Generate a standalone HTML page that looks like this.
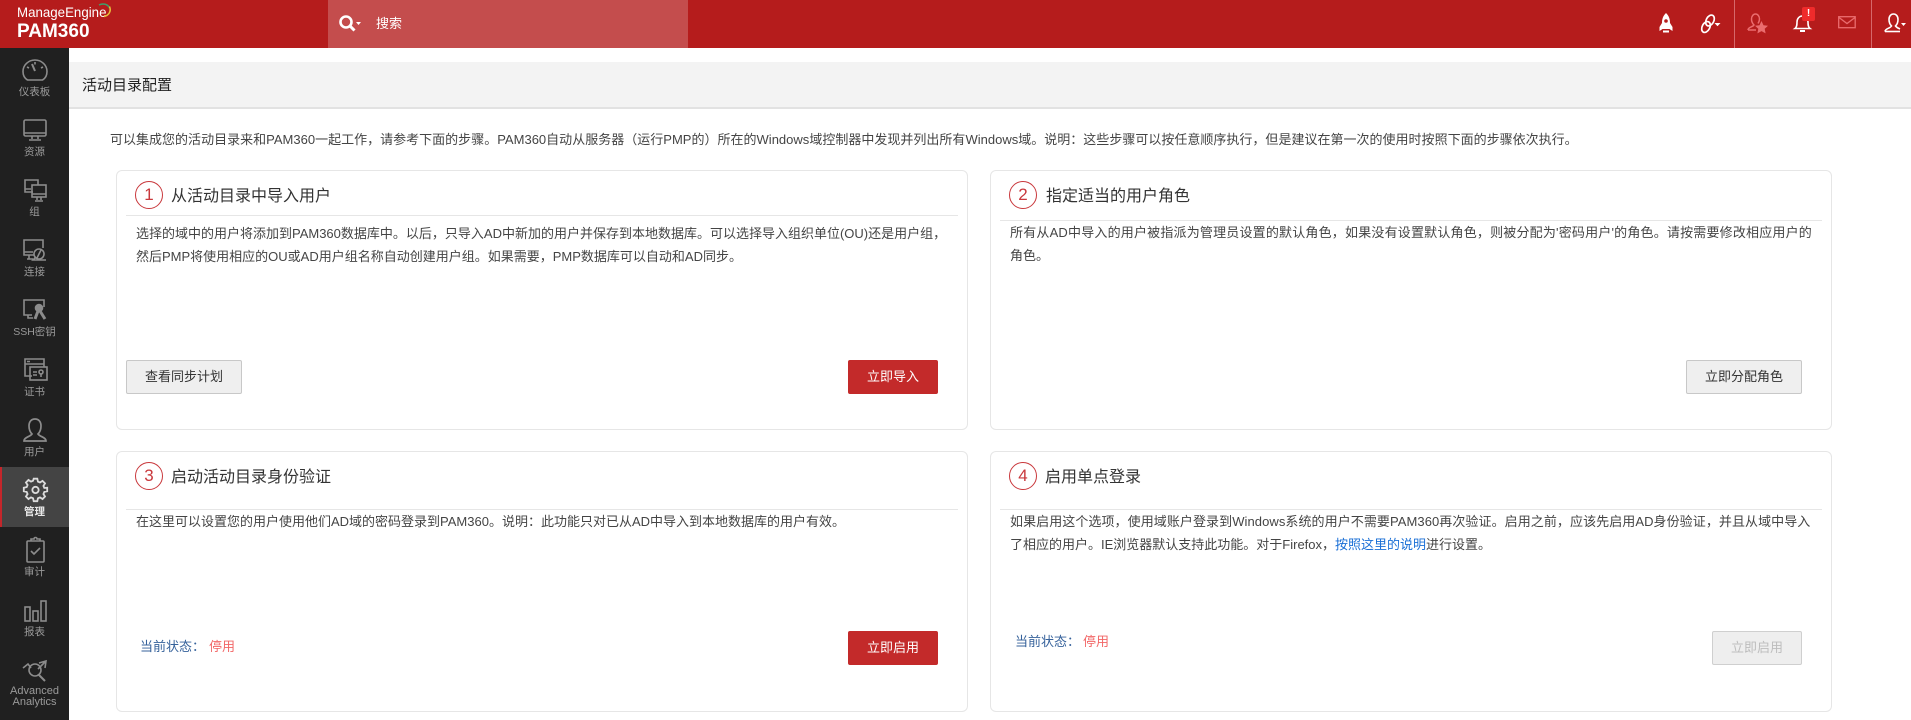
<!DOCTYPE html>
<html lang="zh">
<head>
<meta charset="utf-8">
<title>活动目录配置</title>
<style>
html,body{margin:0;padding:0;width:1911px;height:720px;overflow:hidden;background:#fff;font-family:"Liberation Sans","Noto Sans CJK SC",sans-serif;font-size:13px;color:#333}
.a{position:absolute;white-space:nowrap}
#top{position:absolute;left:0;top:0;width:1911px;height:48px;background:#b51c1c}
#search{position:absolute;left:328px;top:0;width:360px;height:48px;background:#c44d4d}
#side{position:absolute;left:0;top:48px;width:69px;height:672px;background:#202020}
#active{position:absolute;left:0;top:467px;width:69px;height:60px;background:#444;border-left:2px solid #c4262b;box-sizing:border-box}
.lb{position:absolute;left:0;width:69px;text-align:center;font-size:10.5px;line-height:12px;color:#9a9a9a;white-space:nowrap}
.ic{position:absolute;left:20px;width:30px;height:30px;fill:none;stroke:#8c8c8c;stroke-width:1.6}
#bar{position:absolute;left:69px;top:62px;width:1842px;height:45px;background:#f3f3f3;border-bottom:2px solid #e2e2e2}
.card{position:absolute;box-sizing:border-box;border:1px solid #e6e6e6;border-radius:6px;background:#fff}
.sep{position:absolute;height:1px;background:#e6e6e6}
.num{position:absolute;box-sizing:border-box;width:28px;height:28px;border:1px solid #c9383c;border-radius:50%;text-align:center;line-height:26px;font-size:17px;color:#c9383c}
.tt{position:absolute;font-size:16px;line-height:24px;color:#333;white-space:nowrap}
.tx{position:absolute;font-size:13px;line-height:22.5px;color:#444;white-space:nowrap}
.btn{position:absolute;box-sizing:border-box;height:34px;text-align:center;line-height:32px;font-size:13px;border-radius:2px}
.red{background:#c32a2a;color:#fff;border:1px solid #c32a2a}
.gray{background:#efefef;color:#333;border:1px solid #c8c8c8}
.off{background:#eee;color:#bdbdbd;border:1px solid #cfcfcf}
.st{position:absolute;font-size:13px;line-height:16px;color:#36629b;white-space:nowrap}
.st2{position:absolute;font-size:13px;line-height:16px;color:#f26666;white-space:nowrap}
svg{position:absolute;overflow:visible}
</style>
</head>
<body>
<div id="top"></div>
<div id="search"></div>
<div class="a" style="left:17px;top:3px;font-size:14px;line-height:18px;color:#fff;transform:scaleX(.95);transform-origin:0 0">ManageEngine</div>
<svg style="left:99px;top:3px" width="13" height="14" viewBox="0 0 13 14" fill="none" stroke-width="1.5"><path d="M0 2C4 0 9 1 10.500 5" stroke="#3f9f6a"/><path d="M10.500 3.500C12.500 8 10 12.500 5 13.500" stroke="#e8c13a"/></svg>
<div class="a" style="left:17px;top:19px;font-size:19px;line-height:26px;font-weight:bold;color:#fff">PAM360</div>

<svg style="left:338px;top:13px" width="24" height="20" viewBox="0 0 24 20" fill="none" stroke="#fff"><circle cx="8" cy="9" r="5.500" stroke-width="2.600"/><path d="M12 13l4.500 4.500" stroke-width="3"/><path d="M18 9h5l-2.500 3z" fill="#fff" stroke="none"/></svg>
<div class="a" style="left:376px;top:15px;font-size:13px;line-height:18px;color:#fff">搜索</div>

<!-- top right icons -->
<svg style="left:1656px;top:12px" width="20" height="22" viewBox="0 0 20 22"><path d="M10 1C7 4 6 7 6 11l-2.500 4v4l3-2h7l3 2v-4L14 11c0-4-1-7-4-10z" fill="#fff"/><circle cx="10" cy="9" r="1.800" fill="#b51c1c"/><path d="M7 18.500h6v2H7z" fill="#fff"/></svg>
<svg style="left:1700px;top:14px" width="22" height="20" viewBox="0 0 22 20" fill="none" stroke="#fff" stroke-width="1.700"><ellipse cx="10" cy="6.500" rx="3.800" ry="5.800" transform="rotate(28 10 6.500)"/><ellipse cx="6" cy="13" rx="3.800" ry="5.800" transform="rotate(28 6 13)"/><path d="M14.500 9h6l-3 3.200z" fill="#fff" stroke="none"/></svg>
<div class="a" style="left:1734px;top:0;width:1px;height:48px;background:#d6686a"></div>
<svg style="left:1747px;top:13px" width="22" height="22" viewBox="0 0 22 22" fill="none" stroke="#ea6c6e" stroke-width="1.500"><path d="M1 17c0-3 5-3 6-5-2-2-2.500-4-2.500-6 0-3 2-5 4-5s4 2 4 5c0 1.500-.5 3-1.500 4.500"/><path d="M1 17h8"/><path d="M14.500 8l2 4.300 4.500.5-3.300 3 .9 4.600-4.100-2.300-4.100 2.300.9-4.600-3.300-3 4.500-.5z" fill="#ea6c6e" stroke="none"/></svg>
<svg style="left:1794px;top:13px" width="18" height="20" viewBox="0 0 18 20" fill="none" stroke="#fff" stroke-width="1.600"><path d="M1 15.500c2-1.500 2-4 2-6.500 0-3 2-6 5.500-6S14 6 14 9c0 2.500 0 5 2 6.500z"/><path d="M6 18h5" stroke-width="2"/></svg>
<div class="a" style="left:1802px;top:7px;width:13px;height:14px;background:#ef2b2b;border-radius:2px;color:#fff;font-size:10px;line-height:14px;font-weight:bold;text-align:center">!</div>
<svg style="left:1838px;top:16px" width="18" height="13" viewBox="0 0 18 13" fill="none" stroke="#ea6c6e" stroke-width="1.300"><rect x=".7" y=".7" width="16.500" height="11"/><path d="M1 1.500l8 6 8-6"/></svg>
<div class="a" style="left:1871px;top:0;width:1px;height:48px;background:#d6686a"></div>
<svg style="left:1884px;top:13px" width="22" height="20" viewBox="0 0 22 20" fill="none" stroke="#fff" stroke-width="1.600"><path d="M1 18.500c0-3 5-3 6.500-5.500-2-2-2.500-4-2.500-6.500C5 3 7 1 9.500 1S14 3 14 6.500c0 2.500-.5 4.500-2.500 6.500 1 1.500 3 2.200 4.500 3"/><path d="M1 18.500h15"/><path d="M17 10h5l-2.500 3z" fill="#fff" stroke="none"/></svg>

<!-- sidebar -->
<div id="side"></div>
<div id="active"></div>
<svg class="ic" style="top:55px" viewBox="0 0 30 30"><path d="M7.500 25C4 23 3 19.500 3 16.500 3 10 8.500 5 15 5s12 5 12 11.500c0 3-1 6.500-4.500 8.500z"/><path d="M15 16l-3-7" stroke-width="2"/><path d="M15 7v2.500M7 12l2 1M23 12l-2 1"/></svg>
<div class="lb" style="top:86px">仪表板</div>
<svg class="ic" style="top:115px" viewBox="0 0 30 30"><rect x="4" y="5" width="22" height="16" rx="1.500"/><path d="M4 18h22M12 21v3M18 21v3M9 25h12"/></svg>
<div class="lb" style="top:146px">资源</div>
<svg class="ic" style="top:175px" viewBox="0 0 30 30"><path d="M13 17H5V5h13v5M5 14h6"/><rect x="12" y="10" width="14" height="12"/><path d="M12 19h14M17 22v3M21 22v3M15 26h8"/></svg>
<div class="lb" style="top:206px">组</div>
<svg class="ic" style="top:235px" viewBox="0 0 30 30"><path d="M14 20H4V5h19v8M4 17h9M9 20v4M7 24h6"/><circle cx="19" cy="19" r="5"/><path d="M16 22l-3 3h13M21 15l-4 8"/></svg>
<div class="lb" style="top:266px">连接</div>
<svg class="ic" style="top:295px" viewBox="0 0 30 30"><path d="M12 20H4V5h20v7M8 20v3h5"/><circle cx="19" cy="13" r="3.500" fill="#8c8c8c"/><path d="M18 16l-3 8M20 16l5 8" stroke-width="3"/></svg>
<div class="lb" style="top:326px">SSH密钥</div>
<svg class="ic" style="top:355px" viewBox="0 0 30 30"><path d="M12 21H5V4h19v8M5 9h19M7 6.500h3"/><rect x="10" y="12" width="17" height="13"/><circle cx="21" cy="17" r="2"/><path d="M21 19v3M13 17h4M13 20h4"/></svg>
<div class="lb" style="top:386px">证书</div>
<svg class="ic" style="top:415px" viewBox="0 0 30 30"><path d="M4 26c0-4 6-4 8-7-2.500-2.500-3-5-3-8 0-4.500 2.500-7 6-7s6 2.500 6 7c0 3-.5 5.500-3 8 2 3 8 3 8 7z" stroke-width="1.700"/></svg>
<div class="lb" style="top:446px">用户</div>
<svg class="ic" style="left:21.500px;top:476px;width:27px;height:27px;stroke:#dcdcdc;stroke-width:2" viewBox="0 0 30 30"><path d="M13 3h4l.7 3.200 2.300 1 2.800-1.800 2.800 2.800-1.800 2.800 1 2.300L28 13v4l-3.200.7-1 2.300 1.800 2.800-2.800 2.800-2.800-1.800-2.300 1L17 28h-4l-.7-3.200-2.300-1-2.800 1.800-2.800-2.800 1.800-2.800-1-2.300L2 17v-4l3.200-.7 1-2.300-1.800-2.800 2.800-2.800 2.800 1.800 2.300-1z"/><circle cx="15" cy="15.500" r="3.500"/></svg>
<div class="lb" style="top:506px;color:#e8e8e8;font-weight:bold">管理</div>
<svg class="ic" style="top:535px" viewBox="0 0 30 30"><rect x="7" y="6" width="17" height="21" rx="1"/><path d="M11 6V4h3c0-2 3-2 3 0h3v2"/><path d="M11 16l3 3 6-6"/></svg>
<div class="lb" style="top:566px">审计</div>
<svg class="ic" style="top:595px" viewBox="0 0 30 30"><rect x="5" y="12" width="5" height="14"/><rect x="13" y="16" width="5" height="10"/><rect x="21" y="6" width="5" height="20"/></svg>
<div class="lb" style="top:626px">报表</div>
<svg class="ic" style="top:655px" viewBox="0 0 30 30"><path d="M3 13l5-4 3 4M19 8l7-2-1 7M26 6l-8 8"/><circle cx="15" cy="15" r="6"/><path d="M19 20l6 6" stroke-width="2"/></svg>
<div class="lb" style="top:686px;font-size:11px;line-height:10.500px">Advanced<br>Analytics</div>

<!-- title bar -->
<div id="bar"></div>
<div class="a" style="left:82px;top:76px;font-size:15px;line-height:20px;color:#222">活动目录配置</div>
<div class="a" style="left:110px;top:131px;font-size:13px;line-height:18px;color:#444;letter-spacing:.01px">可以集成您的活动目录来和PAM360一起工作，请参考下面的步骤。PAM360自动从服务器（运行PMP的）所在的Windows域控制器中发现并列出所有Windows域。说明：这些步骤可以按任意顺序执行，但是建议在第一次的使用时按照下面的步骤依次执行。</div>

<!-- card 1 -->
<div class="card" style="left:116px;top:170px;width:852px;height:260px"></div>
<div class="num" style="left:135px;top:181px">1</div>
<div class="tt" style="left:171px;top:185px">从活动目录中导入用户</div>
<div class="sep" style="left:126px;top:215px;width:832px"></div>
<div class="tx" style="left:136px;top:223px">选择的域中的用户将添加到PAM360数据库中。以后，只导入AD中新加的用户并保存到本地数据库。可以选择导入组织单位(OU)还是用户组，<br>然后PMP将使用相应的OU或AD用户组名称自动创建用户组。如果需要，PMP数据库可以自动和AD同步。</div>
<div class="btn gray" style="left:126px;top:360px;width:116px">查看同步计划</div>
<div class="btn red" style="left:848px;top:360px;width:90px">立即导入</div>

<!-- card 2 -->
<div class="card" style="left:990px;top:170px;width:842px;height:260px"></div>
<div class="num" style="left:1009px;top:181px">2</div>
<div class="tt" style="left:1046px;top:185px">指定适当的用户角色</div>
<div class="sep" style="left:1000px;top:220px;width:822px"></div>
<div class="tx" style="left:1010px;top:222px"><span style="letter-spacing:.19px">所有从AD中导入的用户被指派为管理员设置的默认角色，如果没有设置默认角色，则被分配为'密码用户'的角色。请按需要修改相应用户的</span><br>角色。</div>
<div class="btn gray" style="left:1686px;top:360px;width:116px">立即分配角色</div>

<!-- card 3 -->
<div class="card" style="left:116px;top:451px;width:852px;height:261px"></div>
<div class="num" style="left:135px;top:462px">3</div>
<div class="tt" style="left:171px;top:466px">启动活动目录身份验证</div>
<div class="sep" style="left:126px;top:509px;width:832px"></div>
<div class="tx" style="left:136px;top:511px">在这里可以设置您的用户使用他们AD域的密码登录到PAM360。说明：此功能只对已从AD中导入到本地数据库的用户有效。</div>
<div class="st" style="left:140px;top:639px">当前状态：</div>
<div class="st2" style="left:209px;top:639px">停用</div>
<div class="btn red" style="left:848px;top:631px;width:90px">立即启用</div>

<!-- card 4 -->
<div class="card" style="left:990px;top:451px;width:842px;height:261px"></div>
<div class="num" style="left:1009px;top:462px">4</div>
<div class="tt" style="left:1045px;top:466px">启用单点登录</div>
<div class="sep" style="left:1000px;top:509px;width:822px"></div>
<div class="tx" style="left:1010px;top:511px"><span style="letter-spacing:.07px">如果启用这个选项，使用域账户登录到Windows系统的用户不需要PAM360再次验证。启用之前，应该先启用AD身份验证，并且从域中导入</span><br>了相应的用户。IE浏览器默认支持此功能。对于Firefox，<span style="color:#1a6fd6">按照这里的说明</span>进行设置。</div>
<div class="st" style="left:1015px;top:634px">当前状态：</div>
<div class="st2" style="left:1083px;top:634px">停用</div>
<div class="btn off" style="left:1712px;top:631px;width:90px">立即启用</div>
</body>
</html>
